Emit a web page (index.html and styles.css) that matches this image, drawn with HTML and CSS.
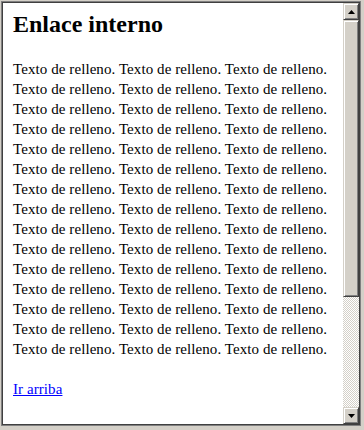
FILE: index.html
```html
<!DOCTYPE html>
<html lang="es">
<head>
    <meta charset="UTF-8">
    <title>Enlace interno</title>
    <link rel="stylesheet" href="styles.css">
</head>
<body>

<div class="frame">
    <div class="page" id="arriba">
        <h1>Enlace interno</h1>
        <p>Texto de relleno. Texto de relleno. Texto de relleno. Texto de relleno. Texto de relleno. Texto de relleno. Texto de relleno. Texto de relleno. Texto de relleno. Texto de relleno. Texto de relleno. Texto de relleno. Texto de relleno. Texto de relleno. Texto de relleno. Texto de relleno. Texto de relleno. Texto de relleno. Texto de relleno. Texto de relleno. Texto de relleno. Texto de relleno. Texto de relleno. Texto de relleno. Texto de relleno. Texto de relleno. Texto de relleno. Texto de relleno. Texto de relleno. Texto de relleno. Texto de relleno. Texto de relleno. Texto de relleno. Texto de relleno. Texto de relleno. Texto de relleno. Texto de relleno. Texto de relleno. Texto de relleno. Texto de relleno. Texto de relleno. Texto de relleno. Texto de relleno. Texto de relleno. Texto de relleno.</p>
        <p><a href="#arriba">Ir arriba</a></p>
    </div>

    <div class="scrollbar">
        <div class="sb-btn">
            <svg width="7" height="4" viewBox="0 0 7 4"><polygon points="3.5,0 7,4 0,4" fill="#000"/></svg>
        </div>
        <div class="sb-thumb"></div>
        <div class="sb-track"></div>
        <div class="sb-btn">
            <svg width="7" height="4" viewBox="0 0 7 4"><polygon points="0,0 7,0 3.5,4" fill="#000"/></svg>
        </div>
    </div>
</div>

</body>
</html>
```

FILE: styles.css
```css
body {
    margin: 0;
    background: #d4d0c8;
    font-family: "Liberation Serif", "Times New Roman", serif;
}
.frame {
    margin: 1px 0 0 1px;
    width: 356px;
    height: 421px;
    display: flex;
    background: #fff;
    border: 1px solid #808080;
    box-shadow: inset 1px 1px #404040, inset -1px -1px #404040;
    padding: 1px;
}
.page {
    flex: 1;
    overflow: hidden;
    padding: 7px 10px 0 10px;
    color: #000;
}
.page h1 {
    margin: 0 0 21px;
    font-size: 24px;
    line-height: 28px;
    font-weight: bold;
}
.page p {
    margin: 0 0 20px;
    font-size: 15px;
    line-height: 20px;
    letter-spacing: 0.08px;
}
.page a {
    color: #0000ff;
    text-decoration: underline;
}

/* classic scrollbar */
.scrollbar {
    width: 16px;
    display: flex;
    flex-direction: column;
}
.sb-btn,
.sb-thumb {
    box-sizing: border-box;
    background: #d4d0c8;
    border-top: 1px solid #d4d0c8;
    border-left: 1px solid #d4d0c8;
    border-right: 1px solid #404040;
    border-bottom: 1px solid #404040;
    box-shadow: inset 1px 1px #fff, inset -1px -1px #808080;
}
.sb-btn {
    height: 17px;
    display: flex;
    align-items: center;
    justify-content: center;
}
.sb-btn svg {
    display: block;
}
.sb-thumb {
    height: 277px;
}
.sb-track {
    flex: 1;
    background: repeating-conic-gradient(#fff 0 25%, #d4d0c8 0 50%) 0 0 / 2px 2px;
}
```
